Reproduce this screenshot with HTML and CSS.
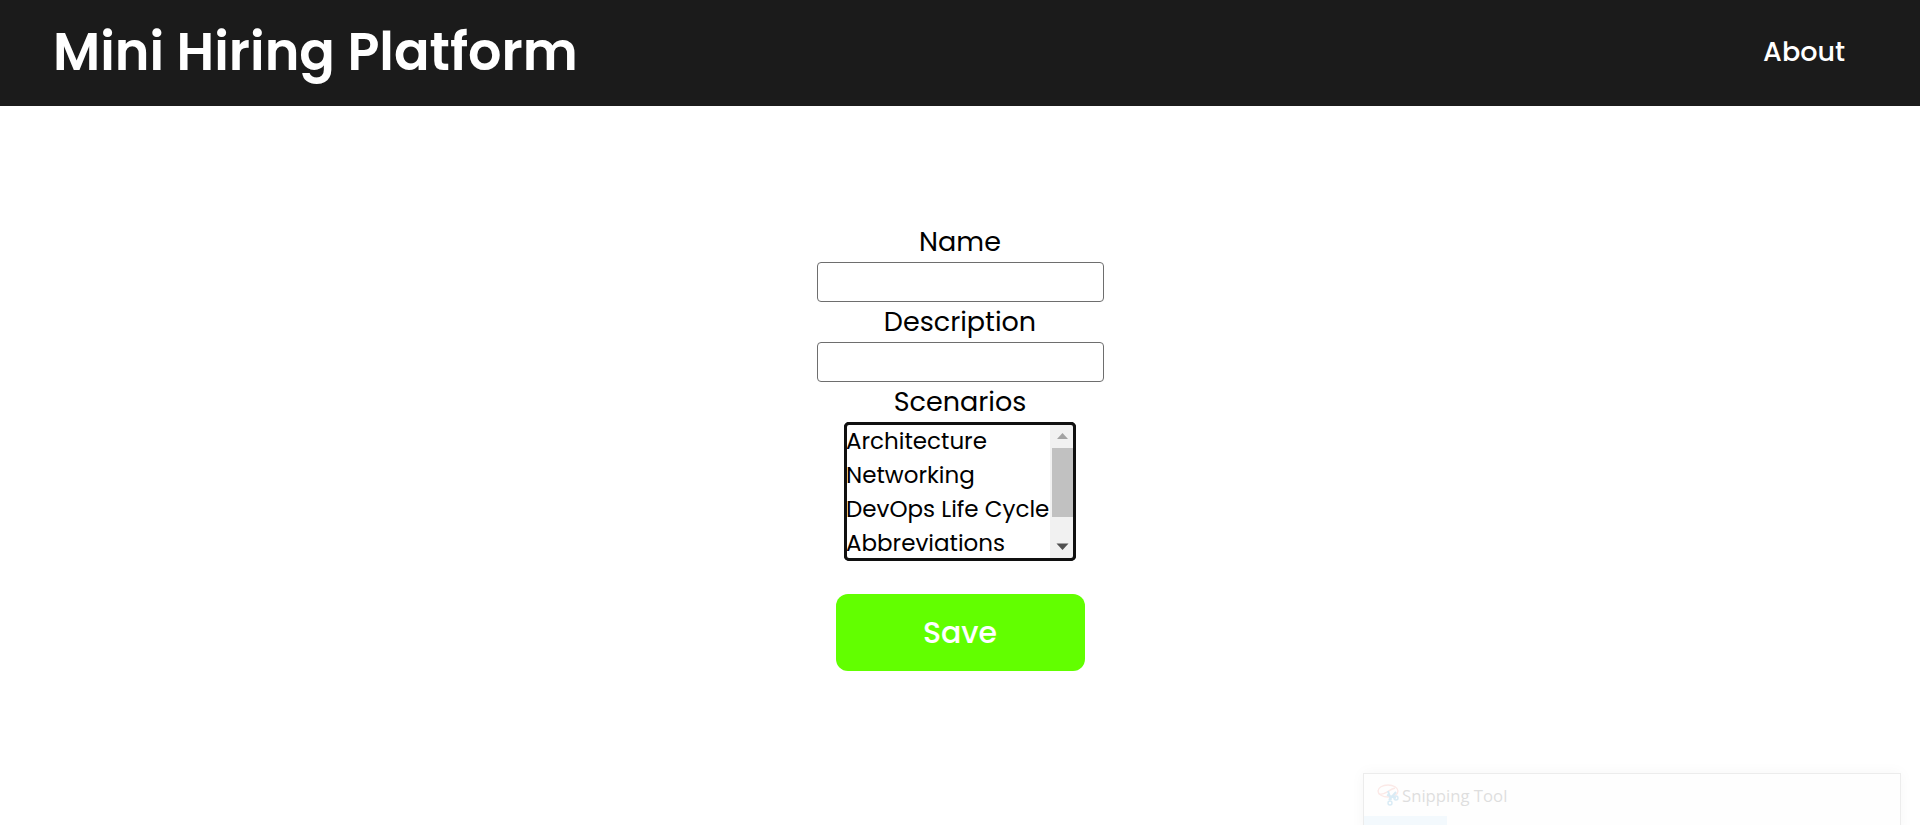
FILE: index.html
```
<!DOCTYPE html>
<html lang="en">
<head>
<meta charset="utf-8">
<title>Mini Hiring Platform</title>
<link rel="stylesheet" href="styles.css">
</head>
<body>
<header class="navbar">
  <h1 class="brand">Mini Hiring Platform</h1>
  <a class="nav-link">About</a>
</header>
<main class="form">
  <label class="label" for="name">Name</label>
  <input class="field" id="name" type="text">
  <label class="label" for="description">Description</label>
  <input class="field" id="description" type="text">
  <span class="label">Scenarios</span>
  <div class="listbox">
    <ul class="options">
      <li>Architecture</li>
      <li>Networking</li>
      <li>DevOps Life Cycle</li>
      <li>Abbreviations</li>
    </ul>
    <div class="scrollbar">
      <svg class="arrow" viewBox="0 0 24 24"><path d="M7 15h11L12.500 9z" fill="#a3a3a3"/></svg>
      <div class="thumb"></div>
      <svg class="arrow arrow-down" viewBox="0 0 24 24"><path d="M6.500 8.500h12L12.500 15z" fill="#505050"/></svg>
    </div>
  </div>
  <button class="save" type="button">Save</button>
</main>
<aside class="toast">
  <div class="toast-title">
    <svg class="toast-icon" viewBox="0 0 24 24" fill="none" stroke-width="1.400">
      <ellipse cx="12" cy="8" rx="10" ry="6" stroke="#fbe9e7"/>
      <path d="M3 11c5 2 9-4 16-6" stroke="#fbe9e7"/>
      <path d="M12 8l3 9M20 9l-7 8M11 12l9 3" stroke="#d9ebf5" stroke-width="2"/>
      <circle cx="14" cy="20" r="2" stroke="#d9ebf5"/><circle cx="20" cy="15" r="2" stroke="#d9ebf5"/>
    </svg>
    <span>Snipping Tool</span>
  </div>
  <div class="toast-tab"></div>
</aside>
</body>
</html>
```
FILE: styles.css
```
* { box-sizing: border-box; }
body {
  margin: 0;
  height: 825px;
  overflow: hidden;
  position: relative;
  background: #fff;
  color: #000;
  font-family: Poppins, Inter, sans-serif;
}
.navbar {
  height: 106px;
  padding: 0 75px 3px 53px;
  display: flex;
  align-items: center;
  justify-content: space-between;
  background: #1b1b1b;
  color: #fff;
}
.brand { margin: 0; padding-top: 1px; font-size: 52.5px; line-height: 76px; font-weight: 600; }
.nav-link { font-size: 27px; font-weight: 500; }
.form {
  display: flex;
  flex-direction: column;
  align-items: center;
  padding-top: 116px;
}
.label { height: 40px; line-height: 40px; font-size: 27px; }
.field {
  width: 287px;
  height: 40px;
  margin: 0;
  border: 1px solid #6e6e6e;
  border-radius: 4px;
  background: #fff;
}
.listbox {
  display: flex;
  width: 232px;
  height: 139px;
  border: 2px solid #101010;
  border-radius: 5px;
  outline: 3px solid #101010;
  outline-offset: -3px;
  overflow: hidden;
}
.options { flex: 1; margin: 0; padding: 0; list-style: none; }
.options li { height: 34px; line-height: 34px; font-size: 23px; white-space: nowrap; }
.scrollbar {
  width: 24px;
  display: flex;
  flex-direction: column;
  align-items: center;
  background: #f1f1f1;
}
.arrow { width: 24px; height: 24px; flex: none; }
.thumb { width: 21px; height: 69px; margin-left: 1px; background: #c1c1c1; }
.arrow-down { margin-top: auto; }
.save {
  width: 249px;
  height: 77px;
  margin-top: 33px;
  padding: 1px 0 0;
  border: 0;
  border-radius: 12px;
  background: #62ff00;
  color: #fff;
  font: 500 30px Poppins, Inter, sans-serif;
}
.toast {
  position: absolute;
  left: 1363px;
  top: 773px;
  width: 538px;
  height: 60px;
  border: 1px solid #ececec;
  background: #fefefe;
  box-shadow: 0 0 14px rgba(0, 0, 0, 0.04);
}
.toast-title {
  height: 42px;
  padding: 0 0 0 12px;
  display: flex;
  align-items: center;
  gap: 2px;
  font: 16.7px "Segoe UI", "Open Sans", sans-serif;
  color: #dedede;
}
.toast-icon { width: 24px; height: 24px; }
.toast-tab { width: 83px; height: 18px; background: #f3f9fd; }
```
